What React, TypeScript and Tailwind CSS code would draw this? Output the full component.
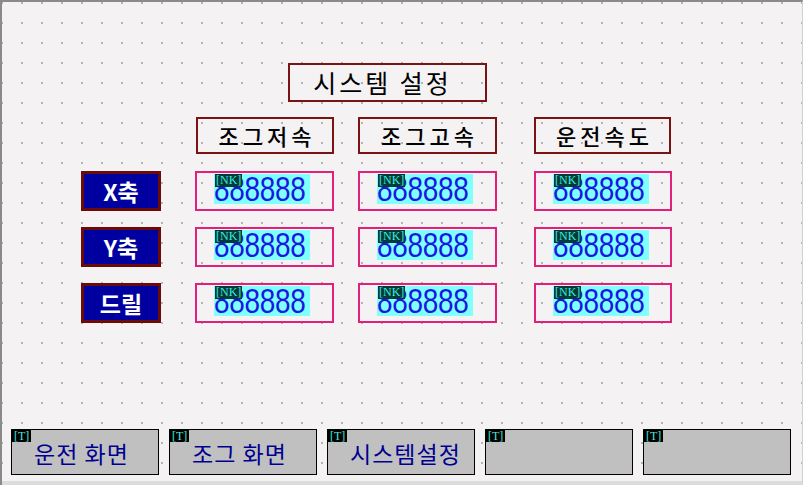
const KR = "font-['Noto_Sans_CJK_KR','Noto_Sans',sans-serif]";

const dots =
  "bg-[radial-gradient(circle,#b4b4b4_0.8px,transparent_1.1px)] bg-[size:20px_20px] bg-[position:-10px_-9px]";

function Header({ text, className }: { text: string; className: string }) {
  return (
    <div
      className={`flex h-[37px] items-center justify-center border-2 border-[#7a1414] pl-[4px] text-[22px] font-medium tracking-[4px] text-black ${KR} ${className}`}>
      {text}
    </div>
  );
}

function AxisLabel({ text }: { text: string }) {
  return (
    <div
      className={`flex h-[40px] w-[80px] items-center justify-center border-[3px] border-[#6a0a0a] bg-[#0000a0] text-[23px] font-bold text-white ${KR}`}>
      {text}
    </div>
  );
}

function NumBox({ className }: { className: string }) {
  return (
    <div className={`h-[40px] border-2 border-[#e0207a] pt-[1px] ${className}`}>
      <div className="relative ml-[17px] h-[30px] w-[96px] bg-[#80ffff]">
        <span className="block origin-top scale-y-[1.28] font-['Liberation_Sans',sans-serif] text-[28px] leading-[24px] tracking-[-0.3px] text-[#1818e0]">
          888888
        </span>
        <span className="absolute left-[1px] top-0 bg-[#003a3a] px-[1px] font-['Liberation_Serif',serif] text-[12px] leading-[13px] text-[#40e8d8]">
          [NK]
        </span>
      </div>
    </div>
  );
}

function NumRow({ label, className }: { label: string; className: string }) {
  return (
    <div className={`ml-[79px] flex ${className}`}>
      <AxisLabel text={label} />
      <NumBox className="ml-[34px] w-[139px]" />
      <NumBox className="ml-[24px] w-[139px]" />
      <NumBox className="ml-[37px] w-[138px]" />
    </div>
  );
}

function FnButton({ text }: { text?: string }) {
  return (
    <div className="relative h-[46px] w-[148px] border border-black bg-[#c0c0c0]">
      <span className="absolute left-0 top-0 bg-black px-[2px] font-['Liberation_Serif',serif] text-[12px] leading-[12px] text-[#40e8d8]">
        [T]
      </span>
      {text && (
        <div
          className={`flex h-full items-center pl-[22px] pt-[2px] text-[23px] tracking-[1px] text-[#000090] ${KR}`}>
          {text}
        </div>
      )}
    </div>
  );
}

export default function App() {
  return (
    <div
      className={`flex h-[485px] w-[803px] flex-col border-l-2 border-t-2 border-r border-[#8a8a8a] border-r-[#d0d0d0] bg-[#f4f2f3] ${dots}`}>
      <div className="ml-[286px] mt-[61px] flex h-[39px] w-[199px] items-center justify-center border-2 border-[#7a1414] pr-[10px] text-[25px] tracking-[3px] text-black">
        <span className={KR}>시스템 설정</span>
      </div>

      <div className="ml-[194px] mt-[15px] flex">
        <Header text="조그저속" className="w-[138px]" />
        <Header text="조그고속" className="ml-[24px] w-[139px]" />
        <Header text="운전속도" className="ml-[37px] w-[137px]" />
      </div>

      <NumRow label="X축" className="mt-[17px]" />
      <NumRow label="Y축" className="mt-[16px]" />
      <NumRow label="드릴" className="mt-[16px]" />

      <div className="ml-[9px] mt-[106px] flex gap-[10px]">
        <FnButton text="운전 화면" />
        <FnButton text="조그 화면" />
        <FnButton text="시스템설정" />
        <FnButton />
        <FnButton />
      </div>

      <div className="mt-auto h-[4px] bg-[#dcdcdc]" />
    </div>
  );
}
